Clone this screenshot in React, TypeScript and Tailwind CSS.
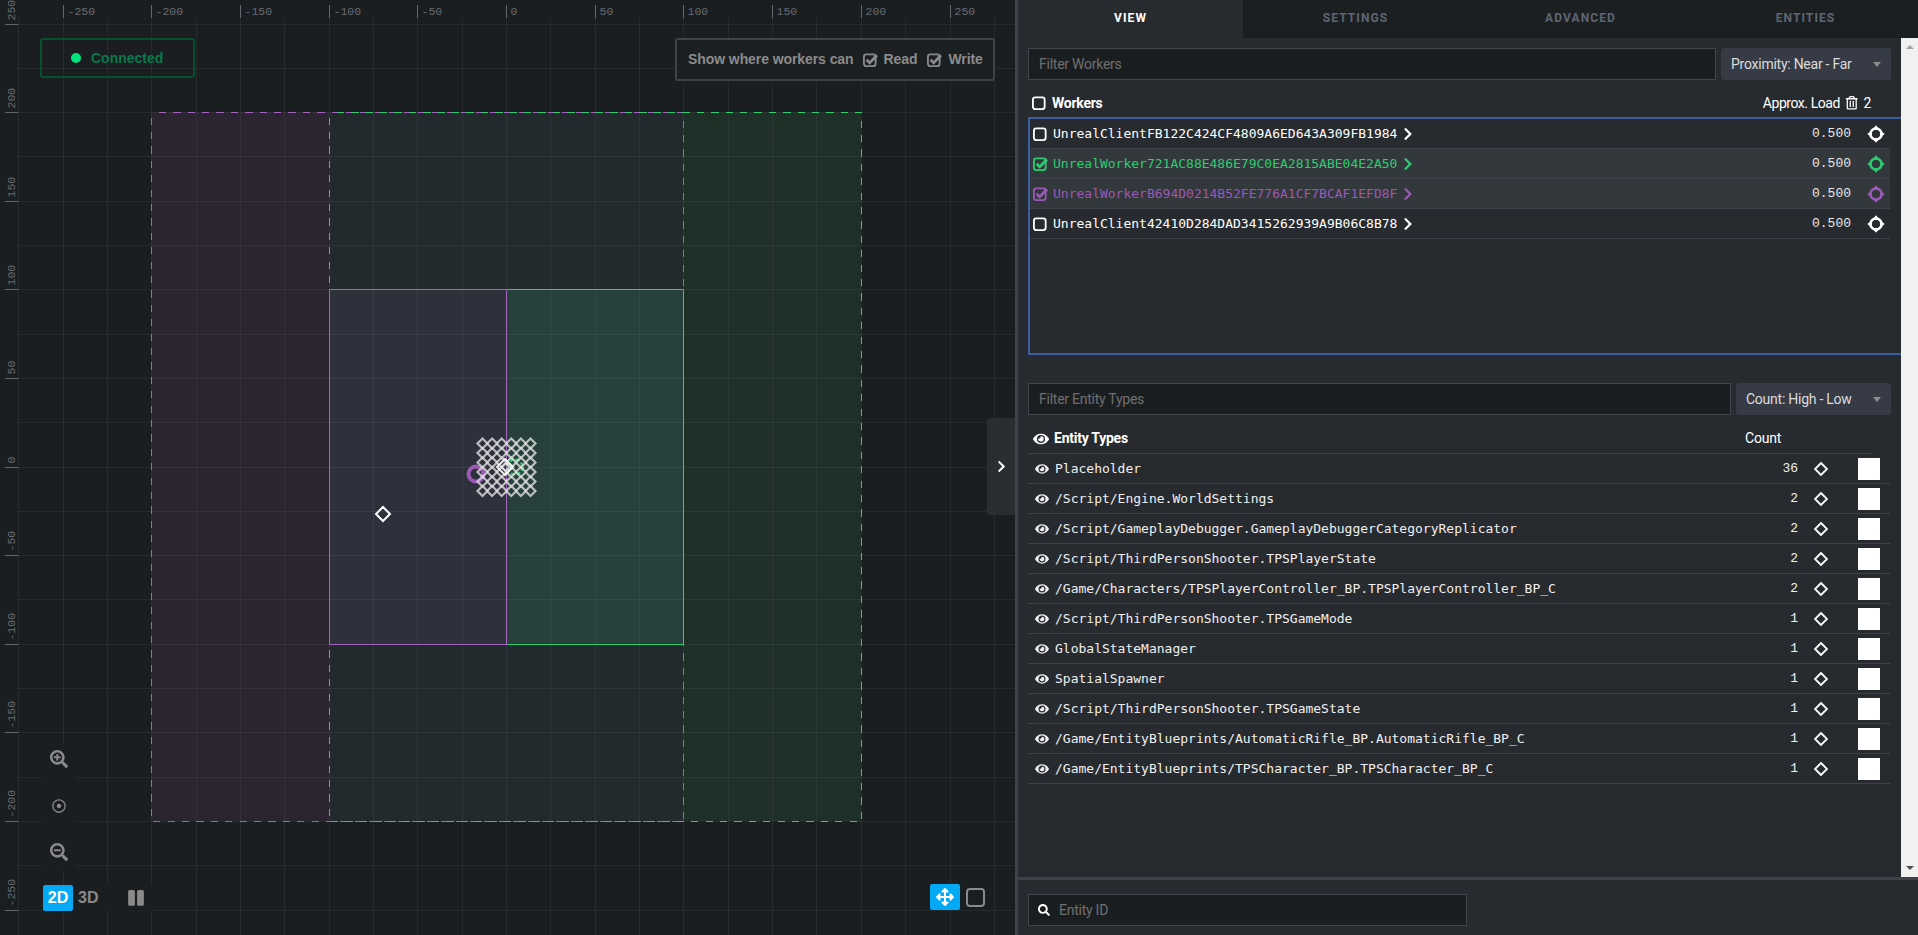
import React from "react";
import { FaEye, FaRegTrashAlt, FaChevronRight, FaSearch, FaSearchPlus, FaSearchMinus, FaRegDotCircle, FaPause, FaArrowsAlt } from "react-icons/fa";

const X = (v: number) => Math.round(506 + v * 1.774);
const Y = (v: number) => Math.round(466.5 - v * 1.772);

function Crosshair({ color }: { color: string }) {
  return (
    <svg width="18" height="18" viewBox="0 0 18 18" fill={color} stroke={color}>
      <circle cx="9" cy="9" r="5.6" strokeWidth="2.5" fill="none" />
      <path d="M9 0.2L11.6 3.6L9 5.2L6.4 3.6ZM9 17.8L11.6 14.4L9 12.8L6.4 14.4ZM0.2 9L3.6 6.4L5.2 9L3.6 11.6ZM17.8 9L14.4 6.4L12.8 9L14.4 11.6Z" stroke="none" />
    </svg>
  );
}

function Diamond({ size = 14 }: { size?: number }) {
  return (
    <svg width={size} height={size} viewBox="0 0 14 14" fill="none" stroke="#fff" strokeWidth="1.8">
      <path d="M7 1L13 7L7 13L1 7Z" />
    </svg>
  );
}

function Box({ checked, size = 15 }: { checked?: boolean; size?: number }) {
  return (
    <svg width={size} height={size} viewBox="0 0 15 15" fill="none" stroke="currentColor" className="shrink-0">
      <rect x="1.8" y="2.3" width="11" height="11" rx="2.2" strokeWidth="1.7" />
      {checked && <path d="M4.3 7.3L7.2 10.2L14 3" strokeWidth="2.6" />}
    </svg>
  );
}

function Canvas() {
  const majors = [-250, -200, -150, -100, -50, 0, 50, 100, 150, 200, 250];
  const minors: number[] = [];
  for (let v = -275; v <= 275; v += 25) minors.push(v);
  const dots: [number, number][] = [];
  for (let r = 0; r < 6; r++) for (let c = 0; c < 6; c++) dots.push([482.5 + c * 9.6, 443.5 + r * 9.5]);
  const t = Y(200);
  const b = Y(-200);
  const t1 = Y(100);
  const b1 = Y(-100);
  return (
    <svg className="absolute inset-0" width="1015" height="935" viewBox="0 0 1015 935" shapeRendering="crispEdges">
      <rect x={X(-200)} y={t} width={X(-100) - X(-200)} height={b - t} fill="#2a2530" />
      <rect x={X(-100)} y={t} width={X(100) - X(-100)} height={b - t} fill="#222a2d" />
      <rect x={X(100)} y={t} width={X(200) - X(100)} height={b - t} fill="#1f3029" />
      <rect x={X(-100)} y={t1} width={X(0) - X(-100)} height={b1 - t1} fill="#2e303c" />
      <rect x={X(0)} y={t1} width={X(100) - X(0)} height={b1 - t1} fill="#27403b" />
      {minors.map((v) => {
        const x = X(v) + 0.5;
        const y = Y(v) + 0.5;
        return (
          <g key={v} stroke="#fff" strokeOpacity="0.055">
            {x > 18 && x < 1015 && <line x1={x} y1="18" x2={x} y2="935" />}
            {y > 18 && y < 935 && <line x1="18" y1={y} x2="1015" y2={y} />}
          </g>
        );
      })}
      {majors.map((v) => {
        const x = X(v) + 0.5;
        const y = Y(v) + 0.5;
        return (
          <g key={v}>
            <line x1={x} y1="5" x2={x} y2="18" stroke="#62676e" />
            <line x1="5" y1={y} x2="18" y2={y} stroke="#62676e" strokeWidth="1.5" />
            <text x={x + 4} y="15" fontFamily="'Liberation Mono', monospace" fontSize="11.5" fill="#666b72" shapeRendering="auto">{v < 0 ? `-${-v}` : v}</text>
            <text transform={`translate(15 ${y - 4}) rotate(-90)`} fontFamily="'Liberation Mono', monospace" fontSize="11.5" fill="#666b72" shapeRendering="auto">{v < 0 ? `-${-v}` : v}</text>
          </g>
        );
      })}
      <rect x={X(-200) + 0.5} y={t + 0.5} width={X(100) - X(-200)} height={b - t} fill="none" stroke="#a463bd" strokeDasharray="7.3 7.1" strokeDashoffset="-7.3" />
      <rect x={X(-100) + 0.5} y={t + 0.5} width={X(200) - X(-100)} height={b - t} fill="none" stroke="#2ecc71" strokeDasharray="7.3 7.1" strokeDashoffset="-7.3" />
      <rect x={X(0) + 0.5} y={t1 + 0.5} width={X(100) - X(0)} height={b1 - t1} fill="none" stroke="#2ecc71" />
      <rect x={X(-100) + 0.5} y={t1 + 0.5} width={X(0) - X(-100)} height={b1 - t1} fill="none" stroke="#a463bd" />
      <g shapeRendering="auto">
        <circle cx="476" cy="474" r="7.5" fill="none" stroke="#9b59b6" strokeWidth="4" />
        <circle cx="515" cy="467" r="7.5" fill="none" stroke="#2ecc71" strokeWidth="2.5" strokeDasharray="4 2" />
        {dots.map(([x, y], i) => (
          <path key={i} d={`M${x} ${y - 5}L${x + 5} ${y}L${x} ${y + 5}L${x - 5} ${y}Z`} fill="none" stroke="#dedede" strokeOpacity="0.8" strokeWidth="2.2" />
        ))}
        <path d="M505 459L513 467L505 475L497 467Z" fill="none" stroke="#fff" strokeOpacity="0.9" strokeWidth="2" />
        <path d="M505 463L509 467L505 471L501 467Z" fill="none" stroke="#fff" strokeOpacity="0.6" strokeWidth="1.5" />
        <path d="M383 507L390 514L383 521L376 514Z" fill="none" stroke="#fff" strokeWidth="2" />
      </g>
    </svg>
  );
}

function Overlays() {
  return (
    <>
      <div className="absolute left-[40px] top-[38px] flex h-[40px] w-[155px] items-center rounded-[3px] border-2 border-[#07502f] pl-[29px] font-['Liberation_Sans',sans-serif] text-[14px] font-bold text-[#07794a]">
        <span className="mr-[10px] h-[10px] w-[10px] rounded-full bg-[#00e57e]" />
        Connected
      </div>
      <div className="absolute left-[675px] top-[38px] flex h-[43px] w-[320px] items-center whitespace-nowrap rounded-[3px] border-2 border-[#3e434a] bg-[#1b1f22] pl-[11px] font-['Liberation_Sans',sans-serif] text-[14px] font-bold tracking-[-0.08px] text-[#8b8b8b]">
        Show where workers can
        <span className="ml-[8px] mr-[6px] flex"><Box checked size={16} /></span>
        Read
        <span className="ml-[9px] mr-[6px] flex"><Box checked size={16} /></span>
        Write
      </div>
      <div className="absolute left-[42px] top-[744px] flex h-[126px] w-[33px] flex-col items-center bg-[#1a1e21] text-[#8a8a8a]">
        <div className="flex h-[30px] items-center justify-center"><FaSearchPlus className="text-[18px]" /></div>
        <div className="mt-[17px] flex h-[30px] items-center justify-center"><FaRegDotCircle className="text-[14px]" /></div>
        <div className="mt-[16px] flex h-[30px] items-center justify-center"><FaSearchMinus className="text-[18px]" /></div>
      </div>
      <div className="absolute left-[43px] top-[885px] flex h-[26px] w-[110px] items-center bg-[#1a1e21] font-['Liberation_Sans',sans-serif] text-[16px] font-bold text-[#8a8a8a]">
        <span className="flex h-[26px] w-[30px] items-center justify-center rounded-[2px] bg-[#03a9f4] text-white">2D</span>
        <span className="ml-[5px]">3D</span>
        <FaPause className="ml-[29px] text-[18px]" />
      </div>
      <div className="absolute left-[930px] top-[884px] flex h-[26px] w-[60px] items-center bg-[#1a1e21]">
        <span className="flex h-[26px] w-[30px] items-center justify-center rounded-[2px] bg-[#03a9f4] text-[18px] text-white"><FaArrowsAlt /></span>
        <span className="ml-[6px] h-[19px] w-[19px] rounded-[4px] border-2 border-[#8a8a8a]" />
      </div>
      <div className="absolute right-0 top-[418px] flex h-[97px] w-[28px] items-center justify-center rounded-l-[3px] bg-[#2a2e33] text-[13px] text-white">
        <FaChevronRight />
      </div>
    </>
  );
}

const workers = [
  { name: "UnrealClientFB122C424CF4809A6ED643A309FB1984", color: "#ffffff", checked: false, hl: false },
  { name: "UnrealWorker721AC88E486E79C0EA2815ABE04E2A50", color: "#2ecc71", checked: true, hl: true },
  { name: "UnrealWorkerB694D0214B52FE776A1CF7BCAF1EFD8F", color: "#9b59b6", checked: true, hl: true },
  { name: "UnrealClient42410D284DAD3415262939A9B06C8B78", color: "#ffffff", checked: false, hl: false },
];

const entities: [string, number][] = [
  ["Placeholder", 36],
  ["/Script/Engine.WorldSettings", 2],
  ["/Script/GameplayDebugger.GameplayDebuggerCategoryReplicator", 2],
  ["/Script/ThirdPersonShooter.TPSPlayerState", 2],
  ["/Game/Characters/TPSPlayerController_BP.TPSPlayerController_BP_C", 2],
  ["/Script/ThirdPersonShooter.TPSGameMode", 1],
  ["GlobalStateManager", 1],
  ["SpatialSpawner", 1],
  ["/Script/ThirdPersonShooter.TPSGameState", 1],
  ["/Game/EntityBlueprints/AutomaticRifle_BP.AutomaticRifle_BP_C", 1],
  ["/Game/EntityBlueprints/TPSCharacter_BP.TPSCharacter_BP_C", 1],
];

function FilterRow({ placeholder, select, inputW, selectW }: { placeholder: string; select: string; inputW: string; selectW: string }) {
  return (
    <div className="flex h-[32px] gap-[5px] text-[14px] tracking-[-0.25px]">
      <div className={`flex items-center border border-[#41464d] bg-[#1b1e21] pl-[10px] text-[#6f6f6f] ${inputW}`}>{placeholder}</div>
      <div className={`flex items-center justify-between rounded-[3px] bg-[#363b46] pl-[10px] pr-[10px] text-[#dcdcdc] ${selectW}`}>
        {select}
        <span className="border-x-[4px] border-t-[5px] border-x-transparent border-t-[#8c8c8c]" />
      </div>
    </div>
  );
}

function Panel() {
  return (
    <div className="flex h-[935px] flex-1 flex-col border-l-[3px] border-[#3e434a] bg-[#272b2f] font-['Roboto',sans-serif]">
      <div className="grid h-[38px] grid-cols-4 bg-[#1b1f22] text-center text-[12px] font-bold leading-[36px] tracking-[1.1px] text-[#5d6673]">
        <div className="bg-[#272b2f] text-white">VIEW</div>
        <div>SETTINGS</div>
        <div>ADVANCED</div>
        <div>ENTITIES</div>
      </div>
      <div className="flex h-[839px]">
        <div className="w-[883px] pl-[10px] pt-[10px]">
          <FilterRow placeholder="Filter Workers" select="Proximity: Near - Far" inputW="w-[688px]" selectW="w-[170px]" />
          <div className="flex h-[37px] w-[862px] items-center pt-[9px] text-[14px] tracking-[-0.25px] text-white">
            <span className="ml-[3px] mr-[5px] flex"><Box size={16} /></span>
            <span className="font-bold">Workers</span>
            <span className="ml-auto mr-[5px] tracking-[-0.45px]">Approx. Load</span>
            <FaRegTrashAlt className="mr-[5px] text-[13.5px]" />
            <span className="mr-[19px]">2</span>
          </div>
          <div className="h-[238px] rounded-tl-[2px] border-y-2 border-l-2 border-[#3a5f9e]">
            {workers.map((w) => (
              <div key={w.name} className={`flex h-[30px] w-[860px] items-center border-b border-[#3e434a] ${w.hl ? "bg-[#33383c]" : ""}`} style={{ color: w.color }}>
                <span className="ml-[2px] flex"><Box checked={w.checked} size={16} /></span>
                <span className="ml-[5px] font-['DejaVu_Sans_Mono',monospace] text-[13px]">{w.name}</span>
                <FaChevronRight className="ml-[4px] text-[14px]" />
                <span className="ml-auto mr-[16px] pt-[1px] font-['Liberation_Mono',monospace] text-[13px] text-[#e8e8e8]">0.500</span>
                <span className="mr-[5px] flex"><Crosshair color={w.color} /></span>
              </div>
            ))}
          </div>
          <div className="mt-[28px]">
            <FilterRow placeholder="Filter Entity Types" select="Count: High - Low" inputW="w-[703px]" selectW="w-[155px]" />
          </div>
          <div className="flex h-[39px] w-[845px] items-center border-b border-[#3e434a] pt-[9px] text-[14px] tracking-[-0.25px] text-white">
            <FaEye className="ml-[5px] mr-[5px] text-[16px]" />
            <span className="font-bold">Entity Types</span>
            <span className="ml-auto mr-[92px]">Count</span>
          </div>
          {entities.map(([name, count]) => (
            <div key={name} className="flex h-[30px] w-[862px] items-center border-b border-[#3e434a] text-[#f0f0f0]">
              <FaEye className="ml-[7px] mr-[6px] text-[14px]" />
              <span className="font-['DejaVu_Sans_Mono',monospace] text-[13px]">{name}</span>
              <span className="ml-auto mr-[16px] font-['Liberation_Mono',monospace] text-[13px]">{count}</span>
              <span className="mr-[30px] flex"><Diamond /></span>
              <span className="mr-[10px] h-[22px] w-[22px] bg-white" />
            </div>
          ))}
        </div>
        <div className="flex w-[17px] flex-col items-center justify-between bg-[#f1f1f1] py-[7px]">
          <span className="border-x-[4px] border-b-[4px] border-x-transparent border-b-[#a3a3a3]" />
          <span className="border-x-[4px] border-t-[4px] border-x-transparent border-t-[#505050]" />
        </div>
      </div>
      <div className="flex flex-1 items-start border-t-[3px] border-[#3e434a] pl-[10px] pt-[14px]">
        <div className="flex h-[32px] w-[439px] items-center border border-[#41464d] bg-[#1b1e21] pl-[9px] text-[14px] tracking-[-0.25px] text-[#6f6f6f]">
          <FaSearch className="mr-[9px] text-[12px] text-white" />
          Entity ID
        </div>
      </div>
    </div>
  );
}

export default function App() {
  return (
    <div className="flex h-[935px] w-[1918px] overflow-hidden bg-[#1a1e21]">
      <div className="relative h-[935px] w-[1015px] shrink-0 overflow-hidden">
        <Canvas />
        <Overlays />
      </div>
      <Panel />
    </div>
  );
}
